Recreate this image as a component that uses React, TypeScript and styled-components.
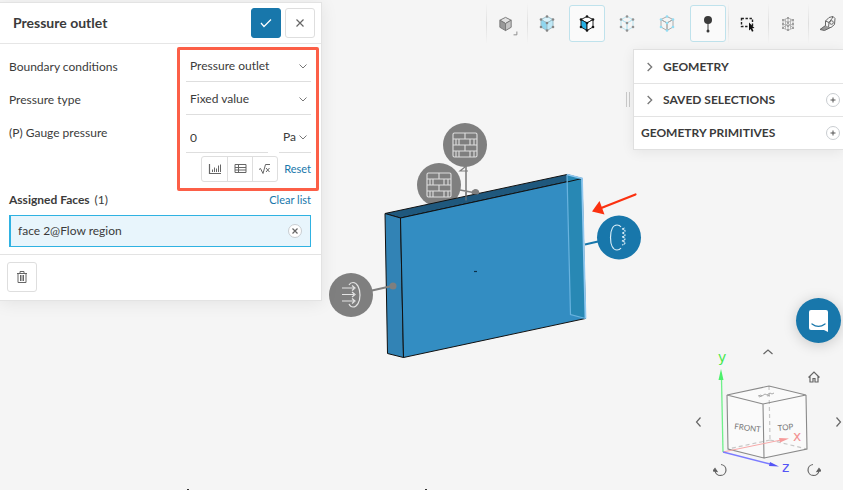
import React from "react";
import styled, { createGlobalStyle, css } from "styled-components";

const GlobalStyle = createGlobalStyle`
  * { box-sizing: border-box; }
  body {
    margin: 0;
    background: #f5f5f5;
    color: #3b3b3b;
    font-family: Lato, "Open Sans", sans-serif;
    font-size: 12px;
    line-height: 20px;
  }
  button, input, select { font: inherit; color: inherit; margin: 0; }
  button { cursor: pointer; }
`;

const Page = styled.div`
  position: relative;
  display: flex;
  align-items: flex-start;
  min-height: 100vh;
  overflow: hidden;
  background: #f5f5f5;
`;

/* ---------- 3D scene ---------- */

const SceneCanvas = styled.svg`
  position: absolute;
  inset: 0;
  width: 100%;
  height: 100%;
`;

function BrickMarker({ x, y }: { x: number; y: number }) {
  return (
    <g transform={`translate(${x} ${y})`}>
      <circle r="22" fill="#7f7f7f" />
      <g fill="none" stroke="#dedede" strokeWidth="1.1">
        <rect x="-12" y="-12" width="24" height="24" rx="1.5" />
        <path d="M-12-6H12M-12 0H12M-12 6H12M0-12v6M0 0v6M-6-6v6M5-6v6M-6 6v6M5 6v6M-9-6v6M9-6v6M-9 6v6M9 6v6" />
      </g>
    </g>
  );
}

function Scene() {
  return (
    <SceneCanvas role="img" aria-label="Flow region model">
      <path d="M466 166V201M460 190l16 3" stroke="#7f7f7f" strokeWidth="1.6" />
      <BrickMarker x={465} y={145} />
      <BrickMarker x={439} y={185} />
      <path d="M465 167l-5 4h8" fill="none" stroke="#7f7f7f" strokeWidth="1.2" />
      <g stroke="#111" strokeWidth="1" strokeLinejoin="round">
        <path d="M385 213.500L567 174.500 582 178.500 400.500 218z" fill="#1f587d" />
        <path d="M385 213.500l15.500 4.500 3 139.500-16-4z" fill="#3283b5" />
        <path d="M400.500 218L582 178.500l3.500 140-182 39z" fill="#338dc2" />
      </g>
      <path d="M567 174.500l15 4 3.500 140-15-4z" fill="#2888b4" />
      <path d="M567 182l15-3.500" stroke="#111" />
      <path d="M567 174.500l3.500 140 15 4" fill="none" stroke="#69b3df" strokeWidth="1.2" />
      <path d="M567 174.500l15 4 3.500 140" fill="none" stroke="#90c8f0" strokeWidth="1.8" />
      <path d="M472 193.500a3.500 3.500 0 0 1 7-1l-1 1.500zM466 192v8.500" fill="#7f7f7f" stroke="#7f7f7f" />
      <path d="M474 271.500h3" stroke="#0c3048" strokeWidth="1.2" />

      <path d="M372 290.500l20-4.500" stroke="#7f7f7f" strokeWidth="1.8" />
      <circle cx="393" cy="286" r="3.500" fill="#7f7f7f" />
      <circle cx="351" cy="295" r="22" fill="#7f7f7f" />
      <g fill="none" stroke="#e4e4e4" strokeWidth="1.200">
        <path d="M342 288h12M342 294.500h12M342 301h12M352 285.500l3 2.500-3 2.500M352 292l3 2.500-3 2.500M352 298.500l3 2.500-3 2.500" />
        <path d="M349 285c1-2 3-2.500 4-2.500 4 0 7 5.500 7 12.500s-3 12-7 12c-2 0-3-1-4-3" />
      </g>

      <path d="M585 244.500l13-3" stroke="#1877ab" strokeWidth="1.8" />
      <circle cx="619" cy="237.500" r="22" fill="#1877ab" />
      <g fill="none" stroke="#d9edf7" strokeWidth="1.200">
        <path d="M621 227c-1-1.500-2-2-4-2-4 0-6.500 5-6.500 12.500S613 250 617 250c2 0 3-.5 4-2" />
        <path d="M622 229l3-1M622 229c4 1 4 3 0 4 4 1 4 3 0 4 4 1 4 3 0 4 4 1 4 3 0 4" strokeDasharray="2 .6" />
      </g>

      <path d="M635.500 194.500L600 208.500" stroke="#fb3110" strokeWidth="2.2" strokeLinecap="round" />
      <path d="M592 211.500l7.500-10.500 5 13.500z" fill="#fb3110" />
      <path d="M187 489.500h2M425 489.500h2" stroke="#333" />
    </SceneCanvas>
  );
}

/* ---------- Settings panel ---------- */

const SettingsPanel = styled.form`
  position: relative;
  flex: none;
  width: 322px;
  margin-top: 2px;
  background: #fff;
  border: 1px solid #e3e3e3;
  border-left: 0;
  box-shadow: 0 2px 16px rgba(0, 0, 0, 0.08);
`;

const PanelHeader = styled.header`
  display: flex;
  align-items: center;
  gap: 4px;
  height: 41px;
  padding: 0 6px 0 13px;
  border-bottom: 1px solid #e6e6e6;
`;

const PanelTitle = styled.h1`
  flex: 1;
  margin: 0;
  font-size: 14px;
  line-height: 20px;
  font-weight: 700;
`;

const SquareButton = styled.button<{ $primary?: boolean }>`
  display: grid;
  place-items: center;
  width: 30px;
  height: 30px;
  padding: 0;
  border: 1px solid ${(p) => (p.$primary ? "#1877ab" : "#dedede")};
  border-radius: 3px;
  background: ${(p) => (p.$primary ? "#1877ab" : "#fff")};
  color: ${(p) => (p.$primary ? "#fff" : "#666")};
`;

const Fields = styled.div`
  position: relative;
  padding: 7px 10px 0 9px;
`;

const FieldRow = styled.div`
  display: grid;
  grid-template-columns: 1fr 125px;
  align-items: start;
  min-height: 33px;
`;

const FieldLabel = styled.label`
  padding-top: 6px;
`;

const SelectBox = styled.div`
  display: flex;
  align-items: center;
  height: 31px;
  border-bottom: 1px solid #dedede;
  svg { flex: none; margin-left: -14px; margin-right: 2px; pointer-events: none; }
`;

const Select = styled.select`
  flex: 1;
  min-width: 0;
  height: 30px;
  padding: 0 14px 0 4px;
  border: 0;
  background: transparent;
  appearance: none;
`;

const ValueRow = styled.div`
  display: grid;
  grid-template-columns: 82px 32px;
  justify-content: space-between;
  padding-top: 5px;
`;

const ValueInput = styled.input`
  width: 100%;
  height: 31px;
  padding: 0 4px;
  border: 0;
  border-bottom: 1px solid #dedede;
  background: transparent;
`;

const InputTools = styled.div`
  display: flex;
  justify-content: flex-end;
  align-items: center;
  gap: 6px;
  padding-top: 3px;
`;

const ToolGroup = styled.div`
  display: flex;
  border: 1px solid #dedede;
  border-radius: 3px;
`;

const ToolButton = styled.button`
  display: grid;
  place-items: center;
  width: 25px;
  height: 24px;
  padding: 0;
  border: 0;
  background: none;
  color: #666;
  & + & { border-left: 1px solid #dedede; }
`;

const TextButton = styled.button`
  padding: 0;
  border: 0;
  background: none;
  color: #1877ab;
  font-size: 11px;
`;

const Highlight = styled.div`
  position: absolute;
  top: 3px;
  right: 2px;
  bottom: -9px;
  width: 142px;
  border: 3px solid #fc5f47;
  border-radius: 2px;
  pointer-events: none;
`;

const Assigned = styled.section`
  padding: 8px 10px 7px 9px;
`;

const AssignedHead = styled.div`
  display: flex;
  justify-content: space-between;
  align-items: center;
`;

const AssignedTitle = styled.h2`
  margin: 0;
  font-size: 12px;
  line-height: 20px;
  span { font-weight: 400; margin-left: 2px; }
`;

const FaceItem = styled.div`
  display: flex;
  align-items: center;
  justify-content: space-between;
  height: 32px;
  margin-top: 5px;
  padding: 0 8px 0 7px;
  border: 1px solid #2fb2e2;
  border-left-width: 2px;
  background: #e8f5fc;
`;

const RoundButton = styled.button`
  display: grid;
  place-items: center;
  flex: none;
  width: 14px;
  height: 14px;
  padding: 0;
  border: 1px solid #c9cdd1;
  border-radius: 50%;
  background: #fff;
  color: #666;
`;

const PanelFooter = styled.footer`
  padding: 7px 7px 8px;
  border-top: 1px solid #e3e3e3;
`;

const Chevron = ({ d = "M2.500 4.500L6 8l3.500-3.500", size = 12 }: { d?: string; size?: number }) => (
  <svg width={size} height={size} viewBox="0 0 12 12" fill="none" stroke="#777">
    <path d={d} />
  </svg>
);

function Settings() {
  return (
    <SettingsPanel onSubmit={(e) => e.preventDefault()}>
      <PanelHeader>
        <PanelTitle>Pressure outlet</PanelTitle>
        <SquareButton $primary type="submit" aria-label="Apply">
          <svg width="14" height="14" viewBox="0 0 14 14" fill="none" stroke="currentColor" strokeWidth="1.200">
            <path d="M2 7l3 3.500 7-7" />
          </svg>
        </SquareButton>
        <SquareButton type="button" aria-label="Close">
          <svg width="12" height="12" viewBox="0 0 12 12" fill="none" stroke="currentColor" strokeWidth="1.200">
            <path d="M2.500 2.500l7 7M9.500 2.500l-7 7" />
          </svg>
        </SquareButton>
      </PanelHeader>
      <Fields>
        <FieldRow>
          <FieldLabel htmlFor="condition">Boundary conditions</FieldLabel>
          <SelectBox>
            <Select id="condition"><option>Pressure outlet</option></Select>
            <Chevron />
          </SelectBox>
        </FieldRow>
        <FieldRow>
          <FieldLabel htmlFor="ptype">Pressure type</FieldLabel>
          <SelectBox>
            <Select id="ptype"><option>Fixed value</option></Select>
            <Chevron />
          </SelectBox>
        </FieldRow>
        <FieldRow>
          <FieldLabel htmlFor="gauge">(P) Gauge pressure</FieldLabel>
          <ValueRow>
            <ValueInput id="gauge" defaultValue="0" />
            <SelectBox>
              <Select aria-label="Unit"><option>Pa</option></Select>
              <Chevron />
            </SelectBox>
          </ValueRow>
        </FieldRow>
        <InputTools>
          <ToolGroup>
            <ToolButton type="button" aria-label="Chart">
              <svg width="14" height="12" viewBox="0 0 14 12" fill="none" stroke="currentColor">
                <path d="M1.500 1v9.500H13" strokeWidth="1.200" />
                <path d="M4.500 6.500V9M6.500 4.500V9M8.500 5.500V9M10.500 2.500V9M12.500 1.500V9" />
              </svg>
            </ToolButton>
            <ToolButton type="button" aria-label="Table">
              <svg width="13" height="12" viewBox="0 0 13 12" fill="none" stroke="currentColor">
                <path d="M1 1.500h11v8H1zM1 4.500h11M1 7h11M4.500 1.500v8" />
              </svg>
            </ToolButton>
            <ToolButton type="button" aria-label="Formula">
              <svg width="14" height="12" viewBox="0 0 14 12" fill="none" stroke="currentColor">
                <path d="M1 6.500l1.500-1L5 10.500 7.500 1.500H12M8 5l3.500 4M11.500 5L8 9" />
              </svg>
            </ToolButton>
          </ToolGroup>
          <TextButton type="reset">Reset</TextButton>
        </InputTools>
        <Highlight />
      </Fields>
      <Assigned>
        <AssignedHead>
          <AssignedTitle>Assigned Faces <span>(1)</span></AssignedTitle>
          <TextButton type="button">Clear list</TextButton>
        </AssignedHead>
        <FaceItem>
          face 2@Flow region
          <RoundButton type="button" aria-label="Remove face">
            <svg width="8" height="8" viewBox="0 0 8 8" stroke="currentColor" strokeWidth="1.200">
              <path d="M1.500 1.500l5 5M6.500 1.500l-5 5" />
            </svg>
          </RoundButton>
        </FaceItem>
      </Assigned>
      <PanelFooter>
        <SquareButton type="button" aria-label="Delete">
          <svg width="12" height="14" viewBox="0 0 12 14" fill="none" stroke="currentColor">
            <path d="M1 3.500h10M4 3V1.500h4V3M2 3.500v9h8v-9M4.500 5v6M6 5v6M7.500 5v6" />
          </svg>
        </SquareButton>
      </PanelFooter>
    </SettingsPanel>
  );
}

/* ---------- Toolbar ---------- */

const Workspace = styled.div`
  display: flex;
  flex: 1;
  flex-direction: column;
  align-items: flex-end;
  min-width: 0;
  min-height: 100vh;
`;

const Toolbar = styled.div`
  position: relative;
  display: flex;
  flex: none;
  gap: 1px;
  margin-right: -5px;
  padding-top: 3px;
`;

const ToolbarGroup = styled.div`
  display: flex;
`;

const ToolbarCell = styled.div<{ $divided?: boolean }>`
  width: 40px;
  padding: 2px;
  ${(p) =>
    p.$divided &&
    css`
      background: linear-gradient(#f5f5f5, #dfdfdf, #f5f5f5) left / 1px 100% no-repeat;
    `}
`;

const ToolbarButton = styled.button<{ $active?: boolean }>`
  display: grid;
  place-items: center;
  width: 36px;
  height: 37px;
  padding: 0;
  border: 1px solid ${(p) => (p.$active ? "#bfe2ec" : "transparent")};
  border-radius: 3px;
  background: ${(p) => (p.$active ? "#fafafa" : "transparent")};
`;

type CubeProps = { top: string; left: string; right: string; line: string; dot?: string };

function Cube({ top, left, right, line, dot }: CubeProps) {
  const dots = [[8, 1.500], [14, 4.500], [14, 12], [8, 15.500], [2, 12], [2, 4.500], [8, 8]];
  return (
    <svg width="16" height="17" viewBox="0 0 16 17" stroke={line} strokeLinejoin="round">
      <path d="M8 1.500l6 3L8 8 2 4.500z" fill={top} />
      <path d="M2 4.500L8 8v7.500L2 12z" fill={left} />
      <path d="M14 4.500L8 8v7.500l6-3.500z" fill={right} />
      {dot && dots.map(([x, y], i) => <circle key={i} cx={x} cy={y} r="1.300" fill={dot} stroke="none" />)}
    </svg>
  );
}

function ViewTools() {
  return (
    <Toolbar role="toolbar" aria-label="View tools">
      <ToolbarGroup>
        <ToolbarCell $divided>
          <ToolbarButton aria-label="Render mode">
            <svg width="34" height="35" viewBox="0 0 36 35" stroke="#777" strokeLinejoin="round">
              <path d="M17.500 11l6 3-6 3.500-6-3.500z" fill="#e2e2e2" />
              <path d="M11.500 14l6 3.500v7.500l-6-3.500z" fill="#999" />
              <path d="M23.500 14l-6 3.500v7.500l6-3.500z" fill="#c4c4c4" />
              <path d="M29.500 26v3.500H26" fill="none" stroke="#888" />
            </svg>
          </ToolbarButton>
        </ToolbarCell>
      </ToolbarGroup>
      <ToolbarGroup>
        <ToolbarCell $divided>
          <ToolbarButton aria-label="Select volumes">
            <Cube top="#d9f2fa" left="#8fd6ef" right="#bfe8f6" line="#9bbfca" dot="#858585" />
          </ToolbarButton>
        </ToolbarCell>
        <ToolbarCell>
          <ToolbarButton $active aria-label="Select faces" aria-pressed>
            <Cube top="#fff" left="#28b0e4" right="#fff" line="#222" dot="#111" />
          </ToolbarButton>
        </ToolbarCell>
        <ToolbarCell>
          <ToolbarButton aria-label="Select edges">
            <Cube top="none" left="none" right="none" line="#b9e4f0" dot="#929292" />
          </ToolbarButton>
        </ToolbarCell>
        <ToolbarCell>
          <ToolbarButton aria-label="Select nodes">
            <Cube top="none" left="none" right="none" line="#aaa" dot="#93dcf2" />
          </ToolbarButton>
        </ToolbarCell>
      </ToolbarGroup>
      <ToolbarGroup>
        <ToolbarCell>
          <ToolbarButton $active aria-label="Probe point" aria-pressed>
            <svg width="10" height="18" viewBox="0 0 10 18" fill="#3a3a3a">
              <circle cx="5" cy="5" r="4" />
              <path d="M5 8v8" stroke="#3a3a3a" />
              <circle cx="5" cy="16" r="1.500" />
            </svg>
          </ToolbarButton>
        </ToolbarCell>
        <ToolbarCell $divided>
          <ToolbarButton aria-label="Box selection">
            <svg width="16" height="16" viewBox="0 0 16 16">
              <path d="M1.500 2.500h11v8h-11z" fill="none" stroke="#222" strokeWidth="1.400" strokeDasharray="2.400 1.600" />
              <path d="M9 6.500l5.500 5.500-2.300.2 1.300 2.800-1.500.7-1.300-2.800L9 14.500z" fill="#111" />
            </svg>
          </ToolbarButton>
        </ToolbarCell>
        <ToolbarCell $divided>
          <ToolbarButton aria-label="Mesh view">
            <svg width="14" height="16" viewBox="0 0 14 16" fill="none" stroke="#b0b0b0">
              <path d="M2 4l5-2 5 2v8l-5 2.500L2 12zM2 4l5 2.500L12 4M7 2v12.500M2 8l5 2 5-2M4.500 3v10M9.500 3v10M2 12l5-5 5 5" strokeWidth=".9" />
              <path d="M1 4h2M1 8h2M1 12h2M6 2h2M6 6.500h2M6 10h2M6 14h2M11 4h2M11 8h2M11 12h2" stroke="#a0a0a0" strokeWidth="1.800" />
            </svg>
          </ToolbarButton>
        </ToolbarCell>
        <ToolbarCell $divided>
          <ToolbarButton aria-label="Measure">
            <svg width="18" height="18" viewBox="0 0 18 18" fill="none" stroke="#666">
              <path d="M6.500 11V6L10 2.500l4-1 2 2-.5 6L12 12.500H8z" />
              <path d="M6.500 6l3.500 1.500 3-4 1-2M10 7.500l-.5 5" />
              <circle cx="12.500" cy="7.500" r="1.800" />
              <path d="M6.500 10.500L1 14.500l4.500 1 6-3" fill="#999" />
            </svg>
          </ToolbarButton>
        </ToolbarCell>
      </ToolbarGroup>
    </Toolbar>
  );
}

/* ---------- Geometry tree ---------- */

const TreeDock = styled.div`
  position: relative;
  display: flex;
  align-items: center;
  gap: 3px;
  margin-top: 5px;
`;

const Grip = styled.div`
  width: 4px;
  height: 15px;
  border: solid #c9c9c9;
  border-width: 0 1px;
`;

const Tree = styled.div`
  width: 210px;
  background: #fff;
  border: 1px solid #e0e0e0;
  border-right: 0;
  box-shadow: 0 2px 12px rgba(0, 0, 0, 0.07);
`;

const TreeRow = styled.div`
  display: flex;
  align-items: center;
  height: 33px;
  padding: 0 3px 0 7px;
  & + & { border-top: 1px solid #e3e3e3; }
`;

const TreeToggle = styled.button`
  display: flex;
  align-items: center;
  gap: 6px;
  flex: 1;
  padding: 0;
  border: 0;
  background: none;
  font-size: 12px;
  font-weight: 700;
  text-align: left;
`;

const Plus = () => (
  <svg width="8" height="8" viewBox="0 0 8 8" stroke="#555">
    <path d="M4 1.500v5M1.500 4h5" />
  </svg>
);

function GeometryTree() {
  return (
    <TreeDock>
      <Grip />
      <Tree>
        <TreeRow>
          <TreeToggle><Chevron size={16} d="M5 3L8 6 5 9" />GEOMETRY</TreeToggle>
        </TreeRow>
        <TreeRow>
          <TreeToggle><Chevron size={16} d="M5 3L8 6 5 9" />SAVED SELECTIONS</TreeToggle>
          <RoundButton aria-label="Add selection"><Plus /></RoundButton>
        </TreeRow>
        <TreeRow>
          <TreeToggle>GEOMETRY PRIMITIVES</TreeToggle>
          <RoundButton aria-label="Add primitive"><Plus /></RoundButton>
        </TreeRow>
      </Tree>
    </TreeDock>
  );
}

/* ---------- Chat and orientation cube ---------- */

const ChatButton = styled.button`
  position: relative;
  display: grid;
  place-items: center;
  width: 45px;
  height: 45px;
  margin: auto 2px 2px 0;
  padding: 0;
  border: 0;
  border-radius: 50%;
  background: #1877ab;
  box-shadow: 0 2px 14px rgba(0, 0, 0, 0.18);
`;

const Orientation = styled.div`
  position: relative;
  width: 153px;
  height: 145px;
`;

const AxisLetter = styled.text`
  font-family: "DejaVu Sans", sans-serif;
  font-size: 14px;
`;

const FaceName = styled.text`
  font-size: 8px;
  fill: #777;
`;

const NavButton = styled.button<{ $x: number; $y: number }>`
  position: absolute;
  left: ${(p) => p.$x}px;
  top: ${(p) => p.$y}px;
  display: grid;
  place-items: center;
  width: 14px;
  height: 14px;
  padding: 0;
  border: 0;
  background: none;
  svg { fill: none; stroke: #666; stroke-width: 1.2; }
`;

const navButtons = [
  { label: "Rotate up", x: 71, y: 0, d: "M2.500 9L7 5l4.500 4" },
  { label: "Home view", x: 117, y: 25, d: "M1.500 7.500L7 2l5.500 5.500M3 6.500V12h3V8.500h2V12h3V6.500" },
  { label: "Rotate left", x: 1, y: 70, d: "M9.500 2.500L5.500 7l4 4.500" },
  { label: "Rotate right", x: 141, y: 70, d: "M5.500 2.500l4 4.500-4 4.500" },
  { label: "Roll left", x: 23, y: 118, d: "M8 1.500a5.500 5.500 0 1 1-6 6", tip: "M0 8l2-2.500 2 3z" },
  { label: "Roll right", x: 117, y: 118, d: "M6 1.500a5.500 5.500 0 1 0 6 6", tip: "M14 8l-2-2.500-2 3z" },
];

function OrientationCube() {
  return (
    <Orientation>
      <svg width="153" height="145" viewBox="0 0 153 145" role="img" aria-label="View orientation">
        <path d="M37 50l42-9 37 9 1 54-43 9-36-9z" fill="#fafafa" />
        <g fill="none" stroke="#c7c7c7" strokeWidth="1.200" strokeDasharray="4 3">
          <path d="M79 41l1 54M80 95l-42 9M80 95l37 9" />
        </g>
        <g fill="none" stroke="#898989" strokeWidth="1.100">
          <path d="M37 50l42-9 37 9-43 9zM37 50l1 54 36 9-1-54M74 113l43-9-1-54" />
        </g>
        <path d="M68 51l3-1 1 1 3-2 2 1 3-2 2 1 2-1M69 52l3-1M77 51l3-1" fill="none" stroke="#aaa" />
        <FaceName x="44" y="84" transform="rotate(7 44 84)">FRONT</FaceName>
        <FaceName x="88" y="86" transform="rotate(-6 88 86)">TOP</FaceName>
        <path d="M33 107l58-12" stroke="#f6a9a9" />
        <path d="M89 93l10 .5-9 4z" fill="#f69a9a" />
        <path d="M33 107L31.500 34" stroke="#6ff08a" strokeWidth="1.300" />
        <path d="M31 24l2.500 11h-5z" fill="#4cf06b" />
        <path d="M33 107l47 12" stroke="#7b7bff" strokeWidth="1.300" />
        <path d="M80 117l9 4.500-10-.5z" fill="#5555f5" />
        <AxisLetter x="28" y="17" fill="#46e84c">y</AxisLetter>
        <AxisLetter x="103" y="96" fill="#f39494">x</AxisLetter>
        <AxisLetter x="92" y="127" fill="#5454f5">z</AxisLetter>
      </svg>
      {navButtons.map((b) => (
        <NavButton key={b.label} aria-label={b.label} $x={b.x} $y={b.y}>
          <svg width="14" height="14" viewBox="0 0 14 14">
            <path d={b.d} />
            {b.tip && <path d={b.tip} fill="#555" />}
          </svg>
        </NavButton>
      ))}
    </Orientation>
  );
}

export default function App() {
  return (
    <Page>
      <GlobalStyle />
      <Scene />
      <Settings />
      <Workspace>
        <ViewTools />
        <GeometryTree />
        <ChatButton aria-label="Open chat">
          <svg width="22" height="24" viewBox="0 0 22 24">
            <path d="M3 1h15a2 2 0 0 1 2 2v20l-4-2H3a2 2 0 0 1-2-2V3a2 2 0 0 1 2-2z" fill="#fff" />
            <path d="M4 15c4 3 9 3 13 0" fill="none" stroke="#1877ab" strokeWidth="1.300" strokeLinecap="round" />
          </svg>
        </ChatButton>
        <OrientationCube />
      </Workspace>
    </Page>
  );
}
